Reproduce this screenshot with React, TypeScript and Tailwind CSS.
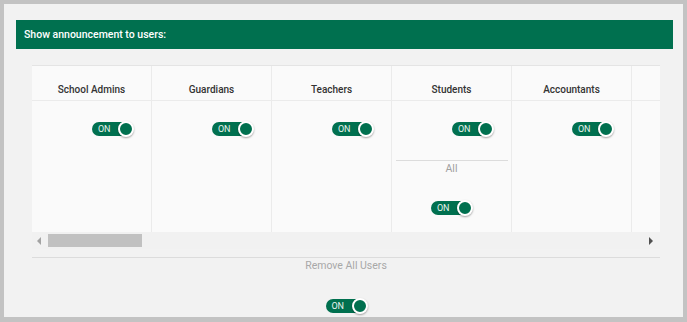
import React from "react";

function Toggle() {
  return (
    <div className="relative w-[42px] h-[16px]">
      <div className="absolute left-0 top-[1px] w-[38px] h-[14px] rounded-full bg-[#00704f] flex items-center pl-[6px]">
        <span className="text-[9px] leading-none text-[#e8f3ee] tracking-[-0.3px]" style={{ fontFamily: "Roboto, sans-serif" }}>ON</span>
      </div>
      <div className="absolute right-0 top-0 w-[16px] h-[16px] rounded-full bg-[#00704f] border-[2.5px] border-white shadow-[0_1px_2px_rgba(0,0,0,0.35)]" />
    </div>
  );
}

const cols = ["School Admins", "Guardians", "Teachers", "Students", "Accountants", ""];

export default function App() {
  return (
    <div className="w-[687px] h-[322px] bg-[#c3c3c3] pt-[4px] pl-[4px] pr-[4px] pb-[5px]" style={{ fontFamily: "Roboto, 'Liberation Sans', sans-serif" }}>
      <div className="h-full bg-[#f2f2f2] pt-[16px] pl-[12px] pr-[10px]">
        <div className="h-[29px] bg-[#00704f] flex items-center pl-[8px] text-white text-[10.5px] font-medium">
          Show announcement to users:
        </div>
        <div className="ml-[16px] mt-[16px] w-[628px]">
          <div className="w-[628px] overflow-hidden bg-[#fafafa] border-t border-[#e4e4e4]">
            <div className="flex w-[720px]">
              {cols.map((c, i) => (
                <div key={i} className="w-[120px] shrink-0 border-r border-[#ebebeb] flex flex-col">
                  <div className="h-[35px] border-b border-[#ebebeb] pt-[17px] text-center text-[10px] font-medium text-[#333] leading-[13px]">
                    {c}
                  </div>
                  <div className="h-[131px] flex flex-col">
                    {c !== "" && (
                      <div className="pt-[20px] pl-[60px]">
                        <Toggle />
                      </div>
                    )}
                    {c === "Students" && (
                      <div className="flex flex-col items-center">
                        <div className="mt-[23px] w-[112px] h-px bg-[#dcdcdc]" />
                        <div className="mt-[1px] text-[10.5px] leading-[14px] text-[#a0a0a0]">All</div>
                        <div className="mt-[24px] pl-[1px]">
                          <Toggle />
                        </div>
                      </div>
                    )}
                  </div>
                </div>
              ))}
            </div>
          </div>
          <div className="h-[17px] bg-[#f1f1f1] flex items-center pl-[5px] pr-[7px]">
            <div className="w-0 h-0 border-y-[4px] border-y-transparent border-r-[4px] border-r-[#a3a3a3]" />
            <div className="ml-[7px] w-[94px] h-[13px] bg-[#c1c1c1]" />
            <div className="flex-1" />
            <div className="w-0 h-0 border-y-[4px] border-y-transparent border-l-[4px] border-l-[#505050]" />
          </div>
          <div className="mt-[8px] h-px bg-[#dcdcdc]" />
          <div className="flex flex-col items-center">
            <div className="mt-[1px] text-[10.5px] leading-[14px] text-[#a8a8a8]">Remove All Users</div>
            <div className="mt-[25px] pl-[1px]">
              <Toggle />
            </div>
          </div>
        </div>
      </div>
    </div>
  );
}
